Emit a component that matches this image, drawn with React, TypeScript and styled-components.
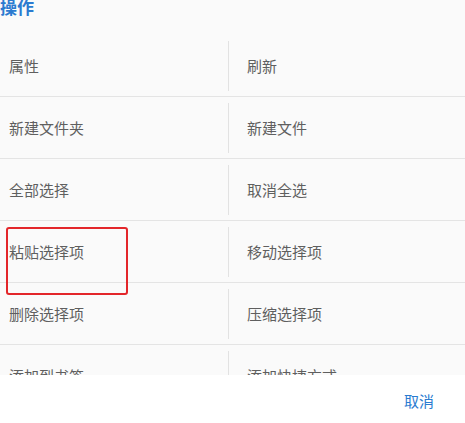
import React from "react"
import styled, { createGlobalStyle } from "styled-components"

const GlobalStyle = createGlobalStyle`
  html, body {
    margin: 0;
    padding: 0;
    background: #ffffff;
    font-family: "Noto Sans CJK SC", "Noto Sans", sans-serif;
  }
`

const Dialog = styled.div`
  width: 465px;
  height: 423px;
  display: flex;
  flex-direction: column;
  background: #ffffff;
  overflow: hidden;
  position: relative;
`

const Header = styled.div`
  height: 35px;
  background: #fafafa;
  overflow: hidden;
  flex-shrink: 0;
`

const Title = styled.h2`
  margin: -3px 0 0 0;
  font-size: 17px;
  line-height: 20px;
  font-weight: 700;
  color: #2b7bd0;
`

const List = styled.div`
  height: 340px;
  background: #fafafa;
  overflow: hidden;
  flex-shrink: 0;
`

const Row = styled.div`
  display: grid;
  grid-template-columns: 228px 1fr;
  height: 61px;
  border-bottom: 1px solid #e4e4e4;
`

const Cell = styled.div<{ $right?: boolean }>`
  display: flex;
  align-items: center;
  padding-left: ${(p) => (p.$right ? "19px" : "9px")};
  font-size: 15px;
  color: #5f5f5f;
  position: relative;
  ${(p) =>
    p.$right &&
    `
    &::before {
      content: "";
      position: absolute;
      left: 0;
      top: 6px;
      bottom: 5px;
      width: 1px;
      background: #e2e2e2;
    }
  `}
`

const Footer = styled.div`
  flex: 1;
  display: flex;
  justify-content: flex-end;
  align-items: center;
  padding-right: 31px;
  padding-top: 2px;
  background: #ffffff;
`

const CancelButton = styled.button`
  border: none;
  background: none;
  padding: 0;
  font-family: inherit;
  font-size: 15px;
  color: #2b7bd0;
`

// red outline drawn on top of the paste item
const Highlight = styled.div`
  position: absolute;
  left: 6px;
  top: 227px;
  width: 118px;
  height: 64px;
  border: 2px solid #e3262a;
  border-radius: 3px;
  pointer-events: none;
`

const actions: [string, string][] = [
  ["属性", "刷新"],
  ["新建文件夹", "新建文件"],
  ["全部选择", "取消全选"],
  ["粘贴选择项", "移动选择项"],
  ["删除选择项", "压缩选择项"],
  ["添加到书签", "添加快捷方式"],
]

const App: React.FC = () => {
  return (
    <>
      <GlobalStyle />
      <Dialog>
        <Header>
          <Title>{"操作"}</Title>
        </Header>
        <List>
          {actions.map(([left, right]) => (
            <Row key={left}>
              <Cell>{left}</Cell>
              <Cell $right>{right}</Cell>
            </Row>
          ))}
        </List>
        <Footer>
          <CancelButton>{"取消"}</CancelButton>
        </Footer>
        <Highlight />
      </Dialog>
    </>
  )
}

export default App
